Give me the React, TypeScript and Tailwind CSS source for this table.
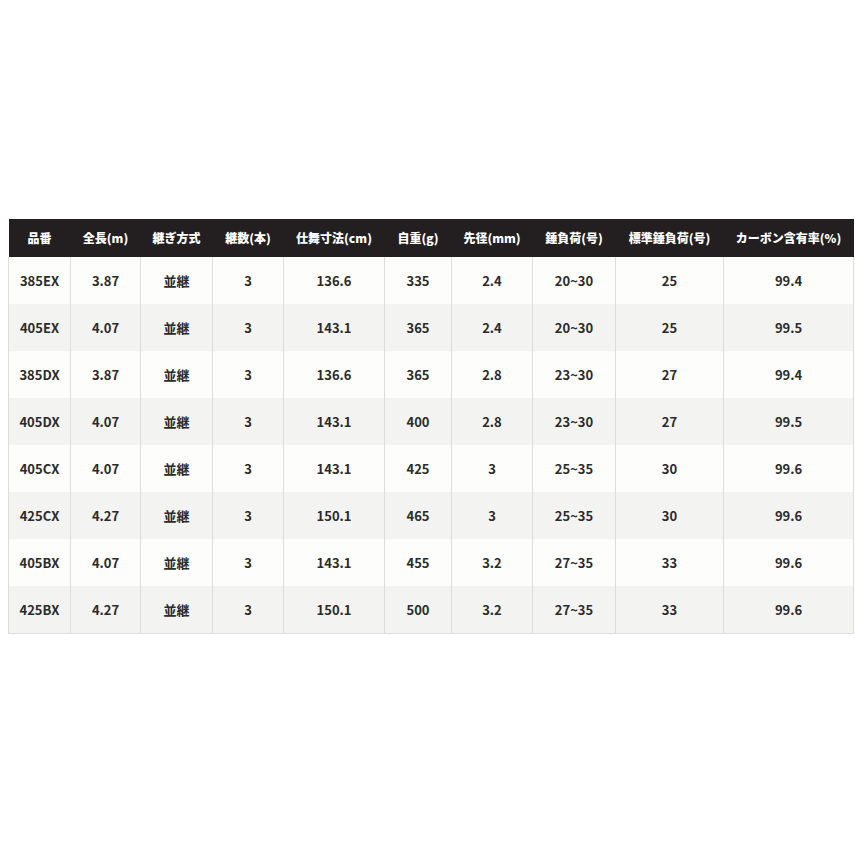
import React from 'react';

const headers = [
  '品番',
  '全長(m)',
  '継ぎ方式',
  '継数(本)',
  '仕舞寸法(cm)',
  '自重(g)',
  '先径(mm)',
  '錘負荷(号)',
  '標準錘負荷(号)',
  'カーボン含有率(%)',
];

const widths = [62, 70, 72, 71, 101, 67, 81, 83, 108, 130];

const rows = [
  ['385EX', '3.87', '並継', '3', '136.6', '335', '2.4', '20~30', '25', '99.4'],
  ['405EX', '4.07', '並継', '3', '143.1', '365', '2.4', '20~30', '25', '99.5'],
  ['385DX', '3.87', '並継', '3', '136.6', '365', '2.8', '23~30', '27', '99.4'],
  ['405DX', '4.07', '並継', '3', '143.1', '400', '2.8', '23~30', '27', '99.5'],
  ['405CX', '4.07', '並継', '3', '143.1', '425', '3', '25~35', '30', '99.6'],
  ['425CX', '4.27', '並継', '3', '150.1', '465', '3', '25~35', '30', '99.6'],
  ['405BX', '4.07', '並継', '3', '143.1', '455', '3.2', '27~35', '33', '99.6'],
  ['425BX', '4.27', '並継', '3', '150.1', '500', '3.2', '27~35', '33', '99.6'],
];

export default function App() {
  return (
    <div
      className="w-[855px] h-[855px] bg-white pt-[219px] pl-[8px] overflow-hidden"
      style={{ fontFamily: '"Noto Sans CJK JP", "Noto Sans", sans-serif' }}
    >
      <table className="table-fixed border-collapse w-[845px]">
        <colgroup>
          {widths.map((w, i) => (
            <col key={i} style={{ width: w }} />
          ))}
        </colgroup>
        <thead>
          <tr className="bg-[#231f20] h-[38px]">
            {headers.map((h) => (
              <th key={h} className="px-0 text-[12px] font-black text-white text-center whitespace-nowrap">
                {h}
              </th>
            ))}
          </tr>
        </thead>
        <tbody className="border-b border-[#dcdcdc]">
          {rows.map((r, i) => (
            <tr key={i} className={`h-[47px] ${i % 2 === 0 ? 'bg-[#fdfdfc]' : 'bg-[#f3f3f2]'}`}>
              {r.map((c, j) => (
                <td
                  key={j}
                  className="border-x border-[#dcdcdc] text-center text-[13px] font-bold text-[#2b2b2b]"
                >
                  {c}
                </td>
              ))}
            </tr>
          ))}
        </tbody>
      </table>
    </div>
  );
}
